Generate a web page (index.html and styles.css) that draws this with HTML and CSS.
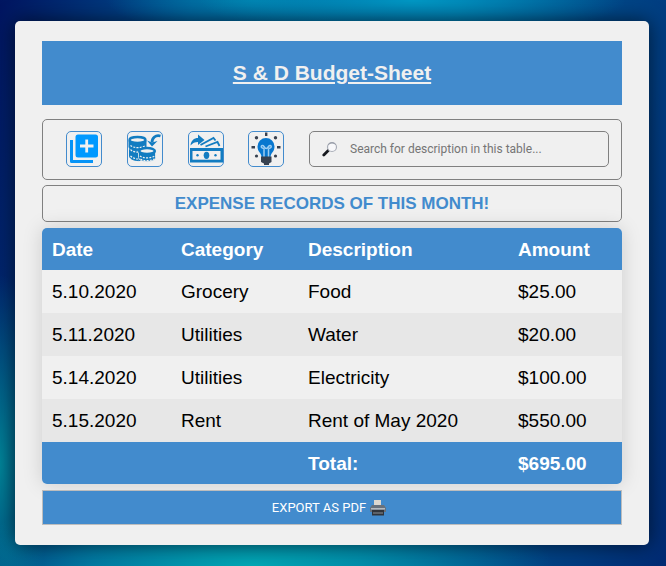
FILE: index.html
```html
<!DOCTYPE html>
<html lang="en">
<head>
<meta charset="utf-8">
<meta name="viewport" content="width=device-width, initial-scale=1">
<title>S &amp; D Budget-Sheet</title>
<link rel="stylesheet" href="styles.css">
</head>
<body>
<main class="panel">
  <header class="banner"><h1>S &amp; D Budget-Sheet</h1></header>
  <div class="toolbar">
    <button class="tool" type="button" aria-label="Add record">
      <svg viewBox="1 1 34 34"><path d="M5.500 9v21.500H27" fill="none" stroke="#0694f7" stroke-width="3" stroke-linejoin="round"/><rect x="9.500" y="3.500" width="22.500" height="23" rx="2.500" fill="#09f"/><path d="M20.700 8.500v13M14 15h13.500" stroke="#f0f0f0" stroke-width="2.800"/></svg>
    </button>
    <button class="tool" type="button" aria-label="Add income">
      <svg viewBox="1 1 34 34" fill="none" stroke="#127cc1">
        <path d="M2.500 18.500v7c1 3 6 4.500 11 4l-1-8z" fill="#127cc1"/>
        <path d="M2 9.500v6.500c0 5 17 5 17 0V9.500z" fill="#127cc1"/>
        <ellipse cx="10.500" cy="9" rx="8" ry="3" fill="#f0f0f0" stroke-width="2.400"/>
        <path d="M3.500 14.500c3 2.800 11 2.800 15 0M3.500 18.700c2 2 5 2.500 7.500 2.500M3.500 25c2 2 5 3 8 3" stroke="#f0f0f0" stroke-width="1.200" stroke-dasharray="2 1.200"/>
        <path d="M11.500 20v6.500c0 5.500 17 5.500 17 0V20z" fill="#127cc1" stroke="#f0f0f0" stroke-width=".8"/>
        <ellipse cx="20" cy="20" rx="7.800" ry="3" fill="#f0f0f0" stroke-width="2.600"/>
        <path d="M13 25c3 2.500 11 2.500 14.500 0M13.500 28c3 2.200 10 2.200 13.500 0" stroke="#f0f0f0" stroke-width="1.200" stroke-dasharray="2 1.200"/>
        <path d="M33.500 5c-5-1.500-8.500 2-8.500 6.500" stroke-width="2.800"/>
        <path d="M20 9.500l5 6 5.500-5.500-5.500 1.500z" fill="#127cc1" stroke="none"/>
      </svg>
    </button>
    <button class="tool" type="button" aria-label="Add expense">
      <svg viewBox="1 1 34 34">
        <path d="M2.500 14.500C3 9.500 6 7 10 7V3.500l6.500 5.500-6.500 5v-3c-3 0-5.500 1-7.500 3.500z" fill="#127cc1"/>
        <path d="M12.500 14l13-7 2 2.500M17.500 15.500l12-4.500 2 4" fill="none" stroke="#127cc1" stroke-width="1.800"/>
        <path d="M2 17h33v14.500H2z" fill="#127cc1"/>
        <path d="M4.500 20h28v8.700h-28z" fill="#f0f0f0"/>
        <ellipse cx="18.500" cy="24.300" rx="2.800" ry="3.600" fill="#127cc1"/>
        <circle cx="9.500" cy="24.300" r="1.200" fill="#127cc1"/><circle cx="27.500" cy="24.300" r="1.200" fill="#127cc1"/>
      </svg>
    </button>
    <button class="tool" type="button" aria-label="Saving ideas">
      <svg viewBox="1 1 34 34">
        <g fill="#374150"><path d="M17 1.500h2.400V5H17z"/><circle cx="8.500" cy="6.800" r="1.700"/><circle cx="27.500" cy="6.800" r="1.700"/><path d="M3.500 15H7v2.400H3.500zM29 15h3.500v2.400H29z"/><circle cx="8.500" cy="25" r="1.600"/><circle cx="27.500" cy="25" r="1.600"/></g>
        <path d="M13.500 26c0-4-4-5-4-10.500a8.500 8.500 0 0 1 17 0c0 5.500-4 6.500-4 10.500z" fill="#0877cf"/>
        <path d="M16 26v-8.500M20.500 26v-8.500M16 17.500c-5-.500-2-5 0-2 1.500 2.500 3 2.500 4.500 0 2-3 5 1.500 0 2" fill="none" stroke="#9ccdf2" stroke-width="1.500"/>
        <path d="M13 25.500h10.500V31L21 32.500V34h-5v-1.500L13 31z" fill="#374150"/>
      </svg>
    </button>
    <label class="search">
      <svg class="lens" viewBox="0 0 16 16"><path d="M1.800 14l4.700-4.700" stroke="#16181d" stroke-width="2.800" stroke-linecap="round"/><circle cx="10" cy="6" r="4.500" fill="#f8f8fa" stroke="#a9adb7" stroke-width="1.200"/><path d="M6.500 3.500c2-2 5-2 7 0" fill="none" stroke="#8b919d"/></svg>
      <input type="text" placeholder="Search for description in this table..." aria-label="Search for description in this table">
    </label>
  </div>
  <h2 class="caption">EXPENSE RECORDS OF THIS MONTH!</h2>
  <table class="records">
    <colgroup><col class="date"><col class="category"><col class="description"><col class="amount"></colgroup>
    <thead><tr><th scope="col">Date</th><th scope="col">Category</th><th scope="col">Description</th><th scope="col">Amount</th></tr></thead>
    <tbody>
      <tr><td>5.10.2020</td><td>Grocery</td><td>Food</td><td>$25.00</td></tr>
      <tr><td>5.11.2020</td><td>Utilities</td><td>Water</td><td>$20.00</td></tr>
      <tr><td>5.14.2020</td><td>Utilities</td><td>Electricity</td><td>$100.00</td></tr>
      <tr><td>5.15.2020</td><td>Rent</td><td>Rent of May 2020</td><td>$550.00</td></tr>
    </tbody>
    <tfoot><tr><td></td><td></td><th scope="row">Total:</th><td>$695.00</td></tr></tfoot>
  </table>
  <button class="export" type="button">EXPORT AS PDF
    <svg viewBox="0 0 16 16"><path d="M4 0h7v6H4z" fill="#ddd8d0"/><path d="M2 5h12l2 3v4H0V8z" fill="#68717c"/><path d="M1 8h14v1.500H1z" fill="#b4bac0"/><path d="M2 10h12v5.500H2z" fill="#30343a"/><path d="M3 12.500h10v1H3z" fill="#8b9096"/></svg>
  </button>
</main>
</body>
</html>
```
FILE: styles.css
```css
* { box-sizing: border-box; }

body {
  min-height: 100vh;
  margin: 0;
  padding: 21px 17px 21px 15px;
  font-family: "Liberation Sans", Arial, sans-serif;
  background:
    radial-gradient(ellipse 32% 40px at 62% 0, #0098c4, transparent),
    radial-gradient(ellipse 22% 36px at 38% 0, #0080ad, transparent),
    radial-gradient(ellipse 45% 80px at 38% 100%, #00a8b4, transparent),
    radial-gradient(ellipse 50px 190px at 0 82%, #008498, transparent),
    linear-gradient(100deg, #001560 0%, #005090 25%, #006099 60%, #003c80 88%, #002a72 100%);
}

.panel {
  display: flex;
  flex-direction: column;
  padding: 20px 27px;
  border-radius: 5px;
  background: #f0f0f0;
  box-shadow: 0 0 20px rgba(0, 0, 0, 0.6);
}

.banner {
  margin-bottom: 14px;
  padding: 16px;
  background: #428bcd;
  color: #f0f0f0;
  text-align: center;
}

h1 {
  margin: 0;
  font-size: 21px;
  line-height: 32px;
  text-decoration: underline;
}

.toolbar {
  display: flex;
  align-items: center;
  justify-content: space-between;
  margin-bottom: 5px;
  padding: 11px 12px 12px 23px;
  border: 1px solid #808080;
  border-radius: 5px;
}

.tool {
  width: 36px;
  height: 36px;
  padding: 0;
  border: 1px solid #428bcd;
  border-radius: 5px;
  background: none;
}

.tool svg { display: block; width: 100%; }

.search {
  display: flex;
  align-items: center;
  gap: 12px;
  flex: 0 1 300px;
  height: 36px;
  padding: 0 12px;
  border: 1px solid #808080;
  border-radius: 5px;
}

.lens { flex: none; width: 16px; }

.search input {
  flex: 1;
  min-width: 0;
  padding: 0;
  border: 0;
  outline: 0;
  background: none;
  font: 12px Roboto, sans-serif;
}

.search input::placeholder { color: #757575; }

.caption {
  margin: 0 0 6px;
  padding: 6px;
  border: 1px solid #808080;
  border-radius: 5px;
  color: #428bcd;
  font-size: 17px;
  line-height: 23px;
  text-align: center;
}

.records {
  width: 100%;
  margin-bottom: 6px;
  table-layout: fixed;
  border-collapse: collapse;
  border-radius: 5px;
  overflow: hidden;
  box-shadow: 0 0 20px rgba(0, 0, 0, 0.15);
  font-size: 19px;
  line-height: 23px;
  text-align: left;
}

.date { width: 129px; }
.category { width: 127px; }
.description { width: 210px; }
.amount { width: 114px; }

.records th,
.records td { height: 43px; padding: 0 10px; }

.records thead th,
.records tfoot th,
.records tfoot td { height: 42px; }

.records thead,
.records tfoot {
  background: #428bcd;
  color: #fff;
  font-weight: bold;
}

.records tbody tr { background: #f0f0f0; }
.records tbody tr:nth-child(even) { background: #e7e7e7; }

.export {
  display: flex;
  align-items: center;
  justify-content: center;
  gap: 4px;
  height: 35px;
  padding: 0 12px 0 6px;
  border: 1px solid #bdbdbd;
  background: #428bcd;
  color: #fff;
  font: 13px Roboto, sans-serif;
}

.export svg { width: 16px; }
```
